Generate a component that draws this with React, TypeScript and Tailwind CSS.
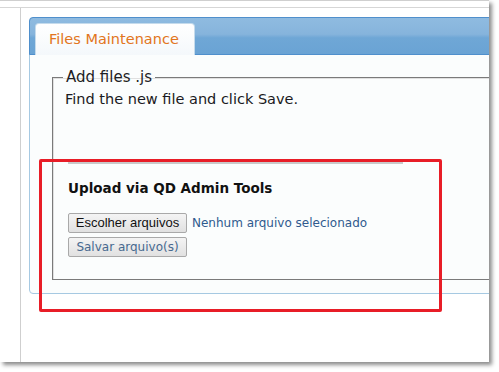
import React from 'react';

const verdana = "font-['DejaVu_Sans',Verdana,sans-serif]";

export default function App() {
  return (
    <div className="relative w-[499px] h-[372px] bg-white overflow-hidden">
      <div className="w-[489px] h-[362px] bg-white overflow-hidden border-t border-[#cfcfcf] shadow-[3px_3px_4px_rgba(0,0,0,0.45)] flex flex-col">
        <div className="h-[6px] shrink-0" />
        <div className="flex flex-1 border-t border-[#d6d6d6]">
          <div className="w-[21px] shrink-0 border-r border-[#cfcfcf]" />
          <div className="flex-1 pl-[8px] pt-[9px]">
            <div className="w-[520px] rounded-[4px] border border-[#a6c9e2] bg-[#fbfdfd]">
              {/* header with tab */}
              <div className="h-[38px] rounded-t-[4px] border border-[#4f8fcc] -m-px bg-[linear-gradient(to_bottom,#8fbbe0_0%,#86b4dc_45%,#6fa7d6_55%,#6aa3d4_100%)] flex items-end pl-[5px]">
                <div className={`h-[32px] w-[160px] -mb-px rounded-t-[4px] border border-b-0 border-[#c5dbec] bg-[linear-gradient(to_bottom,#ffffff,#f4f8fb)] pl-[13px] pt-[6px] text-[14.5px] leading-[18px] text-[#e27520] ${verdana}`}>
                  Files Maintenance
                </div>
              </div>
              {/* content */}
              <div className="pt-[14px] pb-[13px] pl-[22px]">
                <fieldset className="border border-[#7a7a7a] shadow-[inset_1px_1px_0_#e0e0e0] pl-[12px] h-[212px]">
                  <legend className={`-ml-[2px] px-[3px] text-[15px] leading-[18px] text-[#1e1e24] ${verdana}`}>
                    Add files .js
                  </legend>
                  <div className={`mt-[5px] text-[14.5px] leading-[17px] text-[#1a1a22] ${verdana}`}>
                    Find the new file and click Save.
                  </div>
                  <div className="ml-[3px] mt-[54px]">
                    <div className="w-[335px] border-t-2 border-[#c9c9c9]" />
                    <h3 className={`mt-[16px] text-[13.5px] leading-[17px] font-bold text-[#111] ${verdana}`}>
                      Upload via QD Admin Tools
                    </h3>
                    <div className="mt-[16px] flex items-center gap-[5px]">
                      <button className="h-[20px] w-[119px] rounded-[2px] border border-[#a9a9a9] bg-[linear-gradient(to_bottom,#f4f4f4,#e1e1e1)] text-[13px] leading-[18px] text-[#111] font-['Liberation_Sans',Arial,sans-serif]">
                        Escolher arquivos
                      </button>
                      <span className={`text-[12px] leading-[18px] text-[#2f5a8e] ${verdana}`}>
                        Nenhum arquivo selecionado
                      </span>
                    </div>
                    <button className={`mt-[2px] h-[20px] w-[119px] rounded-[2px] border border-[#a9a9a9] bg-[linear-gradient(to_bottom,#f4f4f4,#e1e1e1)] text-[12px] leading-[18px] text-[#47698f] ${verdana}`}>
                      Salvar arquivo(s)
                    </button>
                  </div>
                </fieldset>
              </div>
            </div>
          </div>
        </div>
      </div>
      {/* red highlight overlay */}
      <div className="absolute left-[39px] top-[159px] w-[403px] h-[153px] border-[3.5px] border-[#e81d27] rounded-[2px]" />
    </div>
  );
}
